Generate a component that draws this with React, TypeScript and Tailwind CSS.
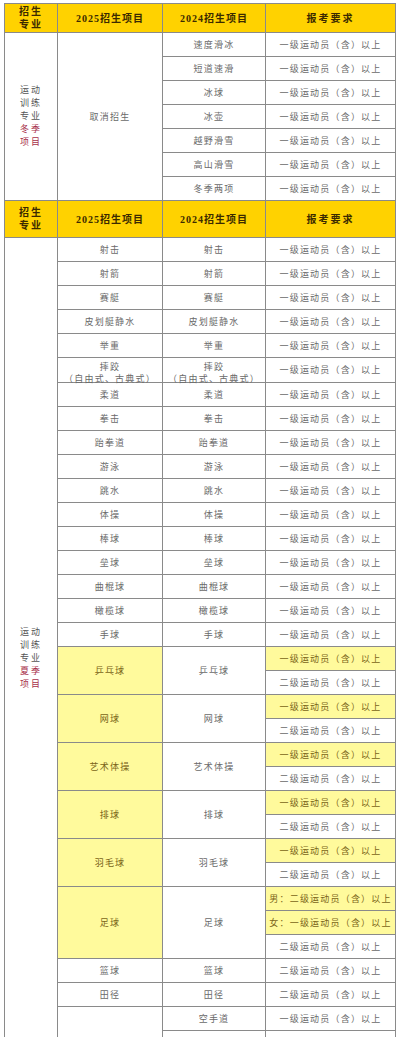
import React from "react";

type Req = { text: string; hl?: boolean };
type Group = { y25: string; y24: string; reqs: Req[]; hl?: boolean };

const LV1 = "一级运动员（含）以上";
const LV2 = "二级运动员（含）以上";

const winter = ["速度滑冰", "短道速滑", "冰球", "冰壶", "越野滑雪", "高山滑雪", "冬季两项"];

const summerSingles = [
  "射击",
  "射箭",
  "赛艇",
  "皮划艇静水",
  "举重",
  "摔跤",
  "柔道",
  "拳击",
  "跆拳道",
  "游泳",
  "跳水",
  "体操",
  "棒球",
  "垒球",
  "曲棍球",
  "橄榄球",
  "手球",
];

const summerGroups: Group[] = [
  { y25: "乒乓球", y24: "乒乓球", hl: true, reqs: [{ text: LV1, hl: true }, { text: LV2 }] },
  { y25: "网球", y24: "网球", hl: true, reqs: [{ text: LV1, hl: true }, { text: LV2 }] },
  { y25: "艺术体操", y24: "艺术体操", hl: true, reqs: [{ text: LV1, hl: true }, { text: LV2 }] },
  { y25: "排球", y24: "排球", hl: true, reqs: [{ text: LV1, hl: true }, { text: LV2 }] },
  { y25: "羽毛球", y24: "羽毛球", hl: true, reqs: [{ text: LV1, hl: true }, { text: LV2 }] },
  {
    y25: "足球",
    y24: "足球",
    hl: true,
    reqs: [
      { text: "男：二级运动员（含）以上", hl: true },
      { text: "女：一级运动员（含）以上", hl: true },
      { text: LV2 },
    ],
  },
  { y25: "篮球", y24: "篮球", reqs: [{ text: LV2 }] },
  { y25: "田径", y24: "田径", reqs: [{ text: LV2 }] },
];

// last group runs past the bottom of the page
const tail = [
  { y24: "空手道", req: LV1 },
  { y24: "", req: "" },
  { y24: "", req: "" },
];

const bd = "border border-[#8a8a8a]";
const txt = "text-[9px] tracking-[1.2px] text-[#6a6a6a] text-center align-middle whitespace-nowrap p-0 leading-[12px]";
const hlBg = "bg-[#fffa9c] text-[#7a6418]";

function HeaderRow({ tall }: { tall?: boolean }) {
  const th = `${bd} bg-[#ffd200] text-[10px] font-bold tracking-[1px] text-[#3b2a00] text-center align-middle p-0`;
  return (
    <tr className={tall ? "h-[37px]" : "h-[29px]"}>
      <th className={`${th} leading-[13px] tracking-[2px]`}>
        <div>招生</div>
        <div>专业</div>
      </th>
      <th className={th}>2025招生项目</th>
      <th className={th}>2024招生项目</th>
      <th className={`${th} tracking-[2px]`}>报考要求</th>
    </tr>
  );
}

function MajorCell({ season, rows }: { season: string; rows: number }) {
  return (
    <td rowSpan={rows} className={`${bd} p-0 align-middle text-center text-[9px] leading-[13px] tracking-[2px]`}>
      <div className="text-[#555]">运动</div>
      <div className="text-[#555]">训练</div>
      <div className="text-[#555]">专业</div>
      <div className="text-[#a8304a]">{season}</div>
      <div className="text-[#a8304a]">项目</div>
    </td>
  );
}

export default function App() {
  const summerRowCount =
    summerSingles.length +
    summerGroups.reduce((n, g) => n + g.reqs.length, 0) +
    tail.length;

  return (
    <div className="bg-white min-h-screen pt-[3px] pl-[4px] [font-family:'Liberation_Serif','Noto_Sans_CJK_SC',serif]">
      <table className="border-collapse table-fixed w-[391px]">
        <colgroup>
          <col className="w-[53px]" />
          <col className="w-[105px]" />
          <col className="w-[103px]" />
          <col className="w-[130px]" />
        </colgroup>
        <tbody>
          <HeaderRow />
          {winter.map((name, i) => (
            <tr key={name} className="h-[24px]">
              {i === 0 && <MajorCell season="冬季" rows={winter.length} />}
              {i === 0 && (
                <td rowSpan={winter.length} className={`${bd} ${txt}`}>
                  取消招生
                </td>
              )}
              <td className={`${bd} ${txt}`}>{name}</td>
              <td className={`${bd} ${txt}`}>{LV1}</td>
            </tr>
          ))}

          <HeaderRow tall />

          {summerSingles.map((name, i) => (
            <tr key={name} className="h-[24px]">
              {i === 0 && <MajorCell season="夏季" rows={summerRowCount} />}
              {name === "摔跤" ? (
                <>
                  <td className={`${bd} ${txt}`}>
                    <div className="pt-[3px]">摔跤</div>
                    <div className="-mb-[3px]">（自由式、古典式）</div>
                  </td>
                  <td className={`${bd} ${txt}`}>
                    <div className="pt-[3px]">摔跤</div>
                    <div className="-mb-[3px]">（自由式、古典式）</div>
                  </td>
                </>
              ) : (
                <>
                  <td className={`${bd} ${txt}`}>{name}</td>
                  <td className={`${bd} ${txt}`}>{name}</td>
                </>
              )}
              <td className={`${bd} ${txt}`}>{LV1}</td>
            </tr>
          ))}

          {summerGroups.map((g) =>
            g.reqs.map((r, j) => (
              <tr key={g.y25 + j} className="h-[24px]">
                {j === 0 && (
                  <td rowSpan={g.reqs.length} className={`${bd} ${txt} ${g.hl ? hlBg : ""}`}>
                    {g.y25}
                  </td>
                )}
                {j === 0 && (
                  <td rowSpan={g.reqs.length} className={`${bd} ${txt}`}>
                    {g.y24}
                  </td>
                )}
                <td className={`${bd} ${txt} ${r.hl ? hlBg : ""}`}>{r.text}</td>
              </tr>
            ))
          )}

          {tail.map((t, i) => (
            <tr key={i} className="h-[24px]">
              {i === 0 && (
                <td rowSpan={tail.length} className={`${bd} ${txt}`}>
                  空手道
                </td>
              )}
              <td className={`${bd} ${txt}`}>{t.y24}</td>
              <td className={`${bd} ${txt}`}>{t.req}</td>
            </tr>
          ))}
        </tbody>
      </table>
    </div>
  );
}
